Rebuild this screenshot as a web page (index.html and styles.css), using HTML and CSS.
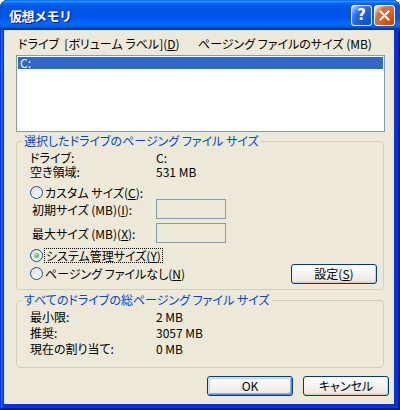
FILE: index.html
```html
<!DOCTYPE html>
<html lang="ja">
<head>
  <meta charset="UTF-8">
  <title>仮想メモリ</title>
  <link rel="stylesheet" href="styles.css">
</head>
<body>
  <div class="window">
    <div class="titlebar">
      <span class="title">仮想メモリ</span>
      <div class="title-buttons">
        <span class="tbtn help">?</span>
        <span class="tbtn close">
          <svg width="11" height="11" viewBox="0 0 11 11">
            <path d="M1.5 1.5 L9.5 9.5 M9.5 1.5 L1.5 9.5" stroke="#fff" stroke-width="2" stroke-linecap="square"/>
          </svg>
        </span>
      </div>
    </div>

    <div class="client">
      <div class="list-head">
        <span class="col-drive">ドライブ&nbsp;&nbsp;[ボリューム ラベル](<u>D</u>)</span>
        <span class="col-size">ページング ファイルのサイズ (MB)</span>
      </div>
      <div class="listbox">
        <div class="list-row selected">C:</div>
      </div>

      <fieldset class="group">
        <legend>選択したドライブのページング ファイル サイズ</legend>
        <div class="info-row"><span>ドライブ:</span><span>C:</span></div>
        <div class="info-row"><span>空き領域:</span><span>531 MB</span></div>

        <div class="radio-row first">
          <span class="radio"></span>
          <span>カスタム サイズ(<u>C</u>):</span>
        </div>
        <div class="field-row">
          <span class="field-label">初期サイズ (MB)(<u>I</u>):</span>
          <span class="textbox"></span>
        </div>
        <div class="field-row">
          <span class="field-label">最大サイズ (MB)(<u>X</u>):</span>
          <span class="textbox"></span>
        </div>

        <div class="radio-row system">
          <span class="radio checked"></span>
          <span class="focus">システム管理サイズ(<u>Y</u>)</span>
        </div>
        <div class="radio-row last">
          <div class="radio-label">
            <span class="radio"></span>
            <span>ページング ファイルなし(<u>N</u>)</span>
          </div>
          <button class="btn set-btn">設定(<u>S</u>)</button>
        </div>
      </fieldset>

      <fieldset class="group totals">
        <legend>すべてのドライブの総ページング ファイル サイズ</legend>
        <div class="total-row"><span>最小限:</span><span>2 MB</span></div>
        <div class="total-row"><span>推奨:</span><span>3057 MB</span></div>
        <div class="total-row"><span>現在の割り当て:</span><span>0 MB</span></div>
      </fieldset>

      <div class="dialog-buttons">
        <button class="btn default">OK</button>
        <button class="btn">キャンセル</button>
      </div>
    </div>
  </div>
</body>
</html>
```

FILE: styles.css
```css
body {
  margin: 0;
  background: #fff;
  font-family: "Noto Sans CJK JP", sans-serif;
  font-size: 12px;
  font-feature-settings: "palt";
  color: #000;
}

u {
  text-decoration: underline;
  text-underline-offset: 1px;
}

.window {
  width: 400px;
  height: 410px;
  display: flex;
  flex-direction: column;
  background: #0831D9;
  border-radius: 8px 8px 0 0;
  overflow: hidden;
  box-shadow: inset -1px -1px #00138C, inset 1px 1px #0831D9,
              inset -2px -2px #001EA0, inset 2px 2px #166AEE,
              inset -3px -3px #003BDA, inset 3px 3px #0855DD;
}

.titlebar {
  height: 30px;
  flex: none;
  display: flex;
  align-items: center;
  justify-content: space-between;
  padding: 0 5px 0 9px;
  background: linear-gradient(180deg, #0058EE 0%, #3593FF 4%, #288EFF 6%, #127DFF 8%, #036FFC 10%, #0262EE 14%, #0057E5 20%, #0054E3 24%, #0055EB 56%, #005BF5 66%, #026AFE 76%, #0062EF 86%, #0052D6 92%, #0040AB 94%, #003092 100%);
}

.title {
  color: #fff;
  font-weight: bold;
  font-size: 13px;
  font-feature-settings: normal;
  letter-spacing: -0.5px;
  text-shadow: 1px 1px #0F1089;
}

.title-buttons {
  display: flex;
  gap: 2px;
}

.tbtn {
  width: 19px;
  height: 19px;
  border: 1px solid #fff;
  border-radius: 3px;
  display: flex;
  align-items: center;
  justify-content: center;
}

.help {
  background: radial-gradient(circle at 90% 90%, #0054E9 0%, #2263D5 55%, #4479E4 70%, #A3BBEC 90%, #fff 100%);
  color: #fff;
  font-family: "DejaVu Sans", sans-serif;
  font-weight: bold;
  font-size: 15px;
}

.close {
  background: radial-gradient(circle at 90% 90%, #CC4600 0%, #DC6527 55%, #CD7546 70%, #FFCCB2 90%, #fff 100%);
}

.client {
  flex: 1;
  margin: 0 6px 6px 4px;
  background: #ECE9D8;
  padding: 0 9px 0 12px;
  display: flex;
  flex-direction: column;
}

.list-head {
  margin-top: 6px;
  line-height: 16px;
  display: flex;
  padding-left: 2px;
}

.col-drive {
  width: 180px;
}

.listbox {
  margin-top: 3px;
  height: 77px;
  box-sizing: border-box;
  border: 1px solid #7F9DB9;
  background: #fff;
  padding: 1px;
}

.list-row {
  height: 12px;
  line-height: 12px;
  padding-left: 2px;
}

.list-row.selected {
  background: #316AC5;
  color: #fff;
}

.group {
  margin: 2px 1px 0 0;
  padding: 2px 6px 9px 13px;
  border: 1px solid #D0D0BF;
  border-radius: 4px;
}

.group legend {
  color: #0046D5;
  line-height: 14px;
  padding: 0 2px;
  margin-left: -8px;
}

.info-row,
.total-row {
  display: grid;
  grid-template-columns: 126px 1fr;
  line-height: 14px;
}

.info-row:first-of-type {
  margin-top: 1px;
}

.radio-row {
  display: flex;
  align-items: center;
  height: 14px;
}

.radio-row.first {
  margin-top: 6px;
}

.radio-row.system {
  margin-top: 5px;
}

.radio-row.last {
  margin-top: 4px;
  justify-content: space-between;
}

.radio-label {
  display: flex;
  align-items: center;
}

.radio {
  width: 11px;
  height: 11px;
  border: 1px solid #1C5180;
  border-radius: 50%;
  background: linear-gradient(135deg, #DCDCD7, #fff);
  margin-right: 2px;
  display: flex;
  align-items: center;
  justify-content: center;
}

.radio.checked::after {
  content: "";
  width: 5px;
  height: 5px;
  border-radius: 50%;
  background: radial-gradient(circle at 35% 35%, #A8F0A6, #21A121);
}

.focus {
  outline: 1px dotted #000;
  outline-offset: 0;
  padding: 0 1px;
  line-height: 13px;
}

.field-row {
  display: grid;
  grid-template-columns: 124px 70px;
  align-items: center;
  padding-left: 2px;
  margin-bottom: 4px;
}

.textbox {
  height: 20px;
  box-sizing: border-box;
  border: 1px solid #7F9DB9;
}

.btn {
  height: 20px;
  box-sizing: border-box;
  border: 1px solid #003C74;
  border-radius: 3px;
  background: linear-gradient(180deg, #fff, #ECEBE6 86%, #D6D0C5);
  box-shadow: inset -1px -1px #D6D0C5;
  font-family: "Noto Sans CJK JP", sans-serif;
  font-size: 12px;
  font-feature-settings: "palt";
  line-height: 16px;
  padding: 0;
  color: #000;
}

.set-btn {
  width: 86px;
  margin-top: 1px;
}

.totals {
  margin-top: 3px;
  padding-bottom: 10px;
}

.total-row {
  line-height: 16px;
}

.dialog-buttons {
  display: flex;
  justify-content: flex-end;
  gap: 10px;
  margin-top: 8px;
  margin-right: -4px;
}

.dialog-buttons .btn {
  width: 86px;
}

.btn.default {
  box-shadow: inset 1px 1px #CEE7FF, inset -1px -1px #6982EE,
              inset 2px 2px #BCD4F6, inset -2px -2px #89ADE4;
}
```
